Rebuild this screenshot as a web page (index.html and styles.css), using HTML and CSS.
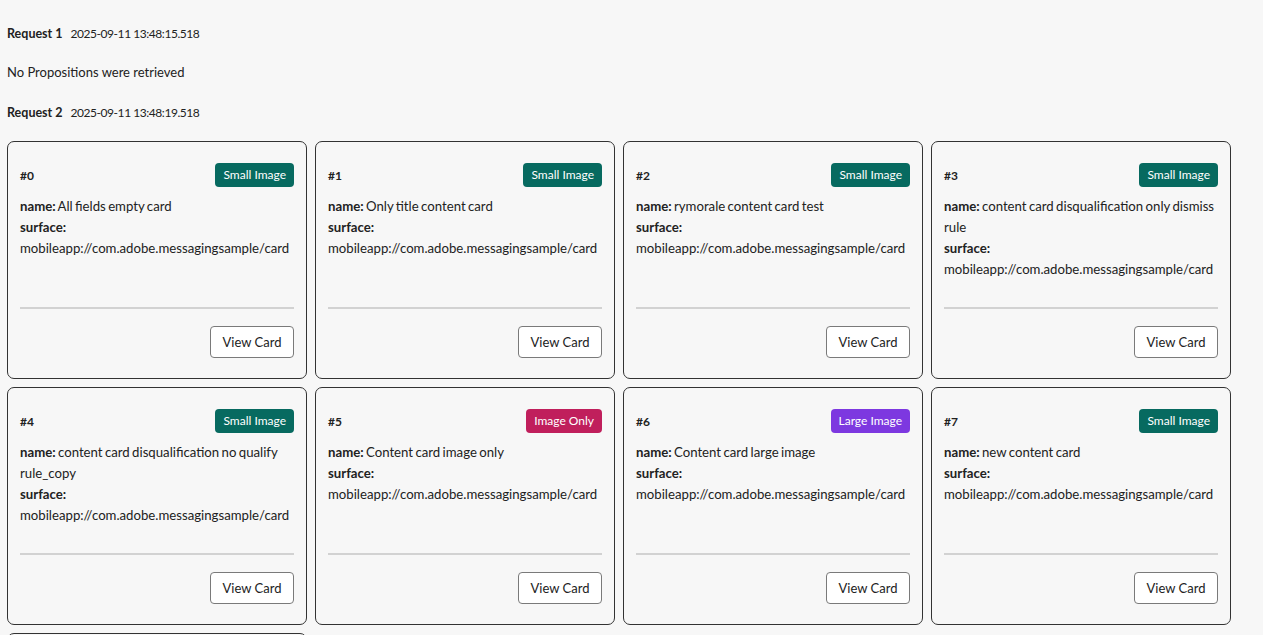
FILE: index.html
```html
<!DOCTYPE html>
<html>
<head>
<meta charset="utf-8">
<link rel="stylesheet" href="styles.css">
</head>
<body>
<div class="page">
  <div class="req"><b>Request 1</b><span class="ts">2025-09-11 13:48:15.518</span></div>
  <p class="none">No Propositions were retrieved</p>
  <div class="req"><b>Request 2</b><span class="ts">2025-09-11 13:48:19.518</span></div>
  <div class="grid">
    <div class="card"><div class="head"><b>#0</b><span class="badge small">Small Image</span></div><div class="body"><div><b>name:</b> All fields empty card</div><div><b>surface:</b></div><div>mobileapp://com.adobe.messagingsample/card</div></div><hr class="div"><div class="foot"><button class="btn">View Card</button></div></div>
    <div class="card"><div class="head"><b>#1</b><span class="badge small">Small Image</span></div><div class="body"><div><b>name:</b> Only title content card</div><div><b>surface:</b></div><div>mobileapp://com.adobe.messagingsample/card</div></div><hr class="div"><div class="foot"><button class="btn">View Card</button></div></div>
    <div class="card"><div class="head"><b>#2</b><span class="badge small">Small Image</span></div><div class="body"><div><b>name:</b> rymorale content card test</div><div><b>surface:</b></div><div>mobileapp://com.adobe.messagingsample/card</div></div><hr class="div"><div class="foot"><button class="btn">View Card</button></div></div>
    <div class="card"><div class="head"><b>#3</b><span class="badge small">Small Image</span></div><div class="body"><div><b>name:</b> content card disqualification only dismiss rule</div><div><b>surface:</b></div><div>mobileapp://com.adobe.messagingsample/card</div></div><hr class="div"><div class="foot"><button class="btn">View Card</button></div></div>
    <div class="card"><div class="head"><b>#4</b><span class="badge small">Small Image</span></div><div class="body"><div><b>name:</b> content card disqualification no qualify rule_copy</div><div><b>surface:</b></div><div>mobileapp://com.adobe.messagingsample/card</div></div><hr class="div"><div class="foot"><button class="btn">View Card</button></div></div>
    <div class="card"><div class="head"><b>#5</b><span class="badge only">Image Only</span></div><div class="body"><div><b>name:</b> Content card image only</div><div><b>surface:</b></div><div>mobileapp://com.adobe.messagingsample/card</div></div><hr class="div"><div class="foot"><button class="btn">View Card</button></div></div>
    <div class="card"><div class="head"><b>#6</b><span class="badge large">Large Image</span></div><div class="body"><div><b>name:</b> Content card large image</div><div><b>surface:</b></div><div>mobileapp://com.adobe.messagingsample/card</div></div><hr class="div"><div class="foot"><button class="btn">View Card</button></div></div>
    <div class="card"><div class="head"><b>#7</b><span class="badge small">Small Image</span></div><div class="body"><div><b>name:</b> new content card</div><div><b>surface:</b></div><div>mobileapp://com.adobe.messagingsample/card</div></div><hr class="div"><div class="foot"><button class="btn">View Card</button></div></div>
    <div class="card"><div class="head"><b>#8</b><span class="badge small">Small Image</span></div><div class="body"><div><b>name:</b> content card</div><div><b>surface:</b></div><div>mobileapp://com.adobe.messagingsample/card</div></div><hr class="div"><div class="foot"><button class="btn">View Card</button></div></div>
  </div>
</div>
</body>
</html>
```
FILE: styles.css
```css
html, body {
  margin: 0;
  background: #f7f7f7;
}
body {
  font-family: Lato, "Open Sans", sans-serif;
  color: #222;
}
.page {
  padding: 25px 7px 0 7px;
}
.req {
  font-size: 12.5px;
  line-height: 18px;
  display: flex;
  gap: 8px;
}
.req b { font-weight: 700; }
.ts {
  font-size: 12px;
  letter-spacing: -0.45px;
}
.none {
  font-size: 13px;
  line-height: 18px;
  margin: 20px 0 23px 0;
}
.grid {
  display: grid;
  grid-template-columns: repeat(4, 300px);
  column-gap: 8px;
  row-gap: 8px;
  margin-top: 19px;
}
.card {
  box-sizing: border-box;
  height: 238px;
  border: 1px solid #333;
  border-radius: 7px;
  padding: 21px 12px 20px 12px;
  display: flex;
  flex-direction: column;
}
.head {
  display: flex;
  justify-content: space-between;
  align-items: center;
  height: 24px;
  font-size: 12px;
}
.badge {
  color: #fff;
  font-size: 12px;
  height: 24px;
  line-height: 24px;
  padding: 0 8px;
  border-radius: 4px;
}
.badge.small { background: #076a60; }
.badge.only { background: #c01f5c; }
.badge.large { background: #7d38e0; }
.body {
  margin-top: 9px;
  min-height: 84px;
  font-size: 13.2px;
  line-height: 21px;
  word-spacing: -1px;
}
.div {
  border: 0;
  height: 2px;
  background: #d2d2d2;
  margin: 27px 0 0 0;
}
.foot {
  display: flex;
  justify-content: flex-end;
  margin-top: 17px;
}
.btn {
  font-family: inherit;
  font-size: 13px;
  color: #222;
  background: #fff;
  border: 1px solid #7a7a7a;
  border-radius: 4px;
  height: 32px;
  width: 84px;
  padding: 0;
}
```
